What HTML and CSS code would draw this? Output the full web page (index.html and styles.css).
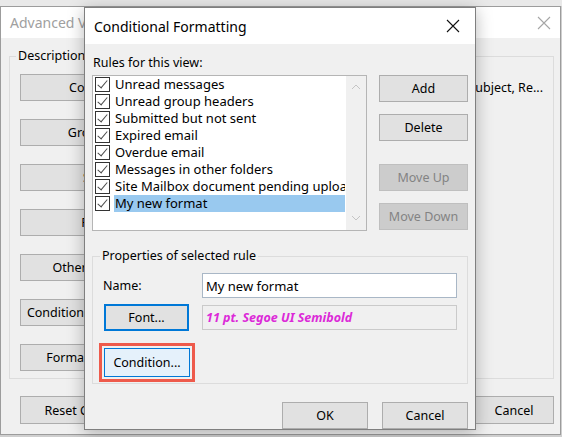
FILE: index.html
```html
<!DOCTYPE html>
<html lang="en">
<head>
    <meta charset="UTF-8">
    <meta name="viewport" content="width=device-width, initial-scale=1.0">
    <title>Conditional Formatting</title>
    <link rel="stylesheet" href="styles.css">
</head>
<body>
    <div class="desktop">
        <div class="strip"></div>

        <!-- window behind -->
        <div class="window back">
            <div class="titlebar back-title">
                <span class="title">Advanced View Settings</span>
                <svg class="close" width="14" height="14" viewBox="0 0 14 14"><path d="M1 1L13 13M13 1L1 13" stroke="#a6a6a6" stroke-width="1.1"/></svg>
            </div>
            <div class="back-body">
                <fieldset class="desc">
                    <legend>Description</legend>
                    <div class="setting-row"><button class="btn wide">Columns...</button><span class="setting-value">Attachment, From, Subject, Re...</span></div>
                    <div class="setting-row"><button class="btn wide">Group By...</button><span class="setting-value"></span></div>
                    <div class="setting-row"><button class="btn wide">Sort...</button><span class="setting-value"></span></div>
                    <div class="setting-row"><button class="btn wide">Filter...</button><span class="setting-value"></span></div>
                    <div class="setting-row"><button class="btn wide">Other Settings...</button><span class="setting-value"></span></div>
                    <div class="setting-row"><button class="btn wide">Conditional Formatting...</button><span class="setting-value"></span></div>
                    <div class="setting-row"><button class="btn wide">Format Columns...</button><span class="setting-value"></span></div>
                </fieldset>
                <div class="back-footer">
                    <button class="btn wide">Reset Current View</button>
                    <span class="spacer"></span>
                    <button class="btn small">OK</button>
                    <button class="btn small">Cancel</button>
                </div>
            </div>
        </div>

        <!-- dialog on top -->
        <div class="window dialog">
            <div class="titlebar">
                <span class="title dark">Conditional Formatting</span>
                <svg class="close" width="14" height="14" viewBox="0 0 14 14"><path d="M1 1L13 13M13 1L1 13" stroke="#111" stroke-width="1.1"/></svg>
            </div>
            <div class="dialog-body">
                <div class="label">Rules for this view:</div>
                <div class="rules-row">
                    <div class="listbox">
                        <ul class="rules">
                            <li><span class="chk"></span><span class="rule-name">Unread messages</span></li>
                            <li><span class="chk"></span><span class="rule-name">Unread group headers</span></li>
                            <li><span class="chk"></span><span class="rule-name">Submitted but not sent</span></li>
                            <li><span class="chk"></span><span class="rule-name">Expired email</span></li>
                            <li><span class="chk"></span><span class="rule-name">Overdue email</span></li>
                            <li><span class="chk"></span><span class="rule-name">Messages in other folders</span></li>
                            <li><span class="chk"></span><span class="rule-name">Site Mailbox document pending upload</span></li>
                            <li class="selected"><span class="chk"></span><span class="rule-name">My new format</span></li>
                        </ul>
                        <div class="scrollbar">
                            <svg width="10" height="6" viewBox="0 0 10 6"><path d="M1 5L5 1L9 5" fill="none" stroke="#c4c4c4"/></svg>
                            <svg width="10" height="6" viewBox="0 0 10 6"><path d="M1 1L5 5L9 1" fill="none" stroke="#c4c4c4"/></svg>
                        </div>
                    </div>
                    <div class="side-buttons">
                        <button class="btn side">Add</button>
                        <button class="btn side">Delete</button>
                        <button class="btn side disabled move-up">Move Up</button>
                        <button class="btn side disabled">Move Down</button>
                    </div>
                </div>

                <fieldset class="props">
                    <legend>Properties of selected rule</legend>
                    <div class="prop-row name-row">
                        <span class="prop-label">Name:</span>
                        <input class="text-field" type="text" value="My new format">
                    </div>
                    <div class="prop-row font-row">
                        <button class="btn prop-btn focused">Font...</button>
                        <div class="font-preview">11 pt. Segoe UI Semibold</div>
                    </div>
                    <div class="prop-row cond-row">
                        <div class="callout">
                            <button class="btn prop-btn hover">Condition...</button>
                        </div>
                    </div>
                </fieldset>

                <div class="dialog-footer">
                    <button class="btn footer-btn">OK</button>
                    <button class="btn footer-btn">Cancel</button>
                </div>
            </div>
        </div>
    </div>
</body>
</html>
```

FILE: styles.css
```css
body {
    margin: 0;
    padding: 0;
    font-family: "Noto Sans", "Open Sans", sans-serif;
    font-size: 12px;
    color: #000;
}
.desktop {
    position: relative;
    width: 562px;
    height: 437px;
    overflow: hidden;
    background: #cfcfcf;
}
.strip {
    height: 6px;
    background: #e9e9e9;
}
.window {
    box-sizing: border-box;
    border: 1px solid #9c9c9c;
    background: #f0f0f0;
}
.titlebar {
    display: flex;
    align-items: center;
    justify-content: space-between;
    background: #fff;
}
.title {
    font-size: 14px;
    color: #a0a0a0;
    white-space: nowrap;
}
.title.dark {
    color: #000;
}
.btn {
    font-family: inherit;
    font-size: 12.5px;
    color: #000;
    background: #e1e1e1;
    border: 1px solid #adadad;
    padding: 0;
    height: 27px;
    box-sizing: border-box;
    white-space: nowrap;
}

/* window behind */
.back {
    width: 561px;
    height: 429px;
}
.back-title {
    height: 31px;
    padding: 0 9px 0 9px;
}
.back-body {
    padding: 10px 6px 0 8px;
}
.desc {
    margin: 0;
    border: 1px solid #dcdcdc;
    padding: 0 10px 7px 10px;
}
.desc legend {
    padding: 0 2px;
    margin-left: -4px;
    font-size: 12.5px;
    line-height: 16px;
}
.setting-row {
    display: flex;
    align-items: center;
    margin-top: 18px;
}
.setting-row:first-of-type {
    margin-top: 10px;
}
.btn.wide {
    width: 160px;
}
.setting-value {
    flex: 1;
    text-align: right;
    padding-right: 0;
    font-size: 12.5px;
    white-space: nowrap;
    overflow: hidden;
}
.back-footer {
    display: flex;
    gap: 8px;
    margin-top: 17px;
    padding-left: 11px;
}
.back-footer .btn {
    height: 28px;
}
.spacer {
    flex: 1;
}
.btn.small {
    width: 80px;
}

/* conditional formatting dialog */
.dialog {
    position: absolute;
    left: 84px;
    top: 7px;
    width: 392px;
    height: 423px;
    border-color: #7f7f7f;
    box-shadow: 0 3px 16px rgba(0, 0, 0, 0.28);
}
.dialog .titlebar {
    height: 36px;
    padding: 0 15px 0 9px;
}
.dialog-body {
    padding: 11px 7px 10px 7px;
}
.label {
    line-height: 16px;
    font-size: 12.5px;
    margin-bottom: 4px;
    padding-left: 1px;
}
.rules-row {
    display: flex;
    gap: 12px;
}
.listbox {
    display: flex;
    width: 275px;
    height: 156px;
    box-sizing: border-box;
    border: 1px solid #b5b5b5;
    background: #fff;
}
.rules {
    flex: 1;
    list-style: none;
    margin: 0;
    padding: 0 1px 0 2px;
    min-width: 0;
}
.rules li {
    display: flex;
    align-items: center;
    height: 17px;
    font-size: 13px;
}
.chk {
    position: relative;
    flex: none;
    width: 15px;
    height: 15px;
    box-sizing: border-box;
    border: 1px solid #333;
    background: #fff;
    margin-right: 4px;
}
.chk::after {
    content: "";
    position: absolute;
    left: 4px;
    top: 0px;
    width: 4px;
    height: 9px;
    border: solid #4a4a4a;
    border-width: 0 1px 1px 0;
    transform: rotate(40deg);
}
.rule-name {
    flex: 1;
    padding-left: 1px;
    line-height: 17px;
    white-space: nowrap;
    overflow: hidden;
}
.rules li.selected .rule-name {
    background: #99c9ef;
}
.scrollbar {
    width: 20px;
    background: #f0f0f0;
    display: flex;
    flex-direction: column;
    align-items: center;
    justify-content: space-between;
    padding: 8px 0 9px 0;
}
.side-buttons {
    display: flex;
    flex-direction: column;
}
.btn.side {
    width: 89px;
    margin-bottom: 12px;
}
.btn.side.move-up {
    margin-top: 11px;
}
.btn.disabled {
    background: #cccccc;
    border-color: #bfbfbf;
    color: #838383;
}
.props {
    margin: 6px 0 0 0;
    border: 1px solid #dcdcdc;
    padding: 0 10px 1px 10px;
}
.props legend {
    padding: 0 2px;
    margin-left: -3px;
    font-size: 12.5px;
    line-height: 16px;
}
.prop-row {
    display: flex;
    align-items: center;
}
.name-row {
    margin-top: 9px;
}
.prop-label {
    width: 99px;
    font-size: 12.5px;
}
.text-field {
    width: 255px;
    height: 25px;
    box-sizing: border-box;
    border: 1px solid #a9b7c6;
    padding: 0 3px;
    font-family: inherit;
    font-size: 13px;
    color: #000;
    margin: 0;
}
.font-row {
    margin-top: 6px;
}
.btn.prop-btn {
    width: 85px;
}
.font-row .btn {
    margin-left: 1px;
    margin-right: 13px;
}
.btn.focused {
    border: 2px solid #0078d7;
}
.font-preview {
    width: 255px;
    height: 25px;
    box-sizing: border-box;
    border: 1px solid #cacaca;
    padding: 0 3px;
    line-height: 23px;
    font-size: 12.5px;
    font-weight: bold;
    font-style: italic;
    color: #dc2ad8;
}
.cond-row {
    margin-top: 12px;
}
.callout {
    margin-left: -4px;
    border: 3px solid #ee5a4b;
    padding: 2px;
}
.btn.hover {
    width: 86px;
    height: 29px;
    background: #e5f1fb;
    border-color: #0078d7;
}
.dialog-footer {
    display: flex;
    justify-content: flex-end;
    gap: 14px;
    margin-top: 18px;
}
.btn.footer-btn {
    width: 86px;
}
```
